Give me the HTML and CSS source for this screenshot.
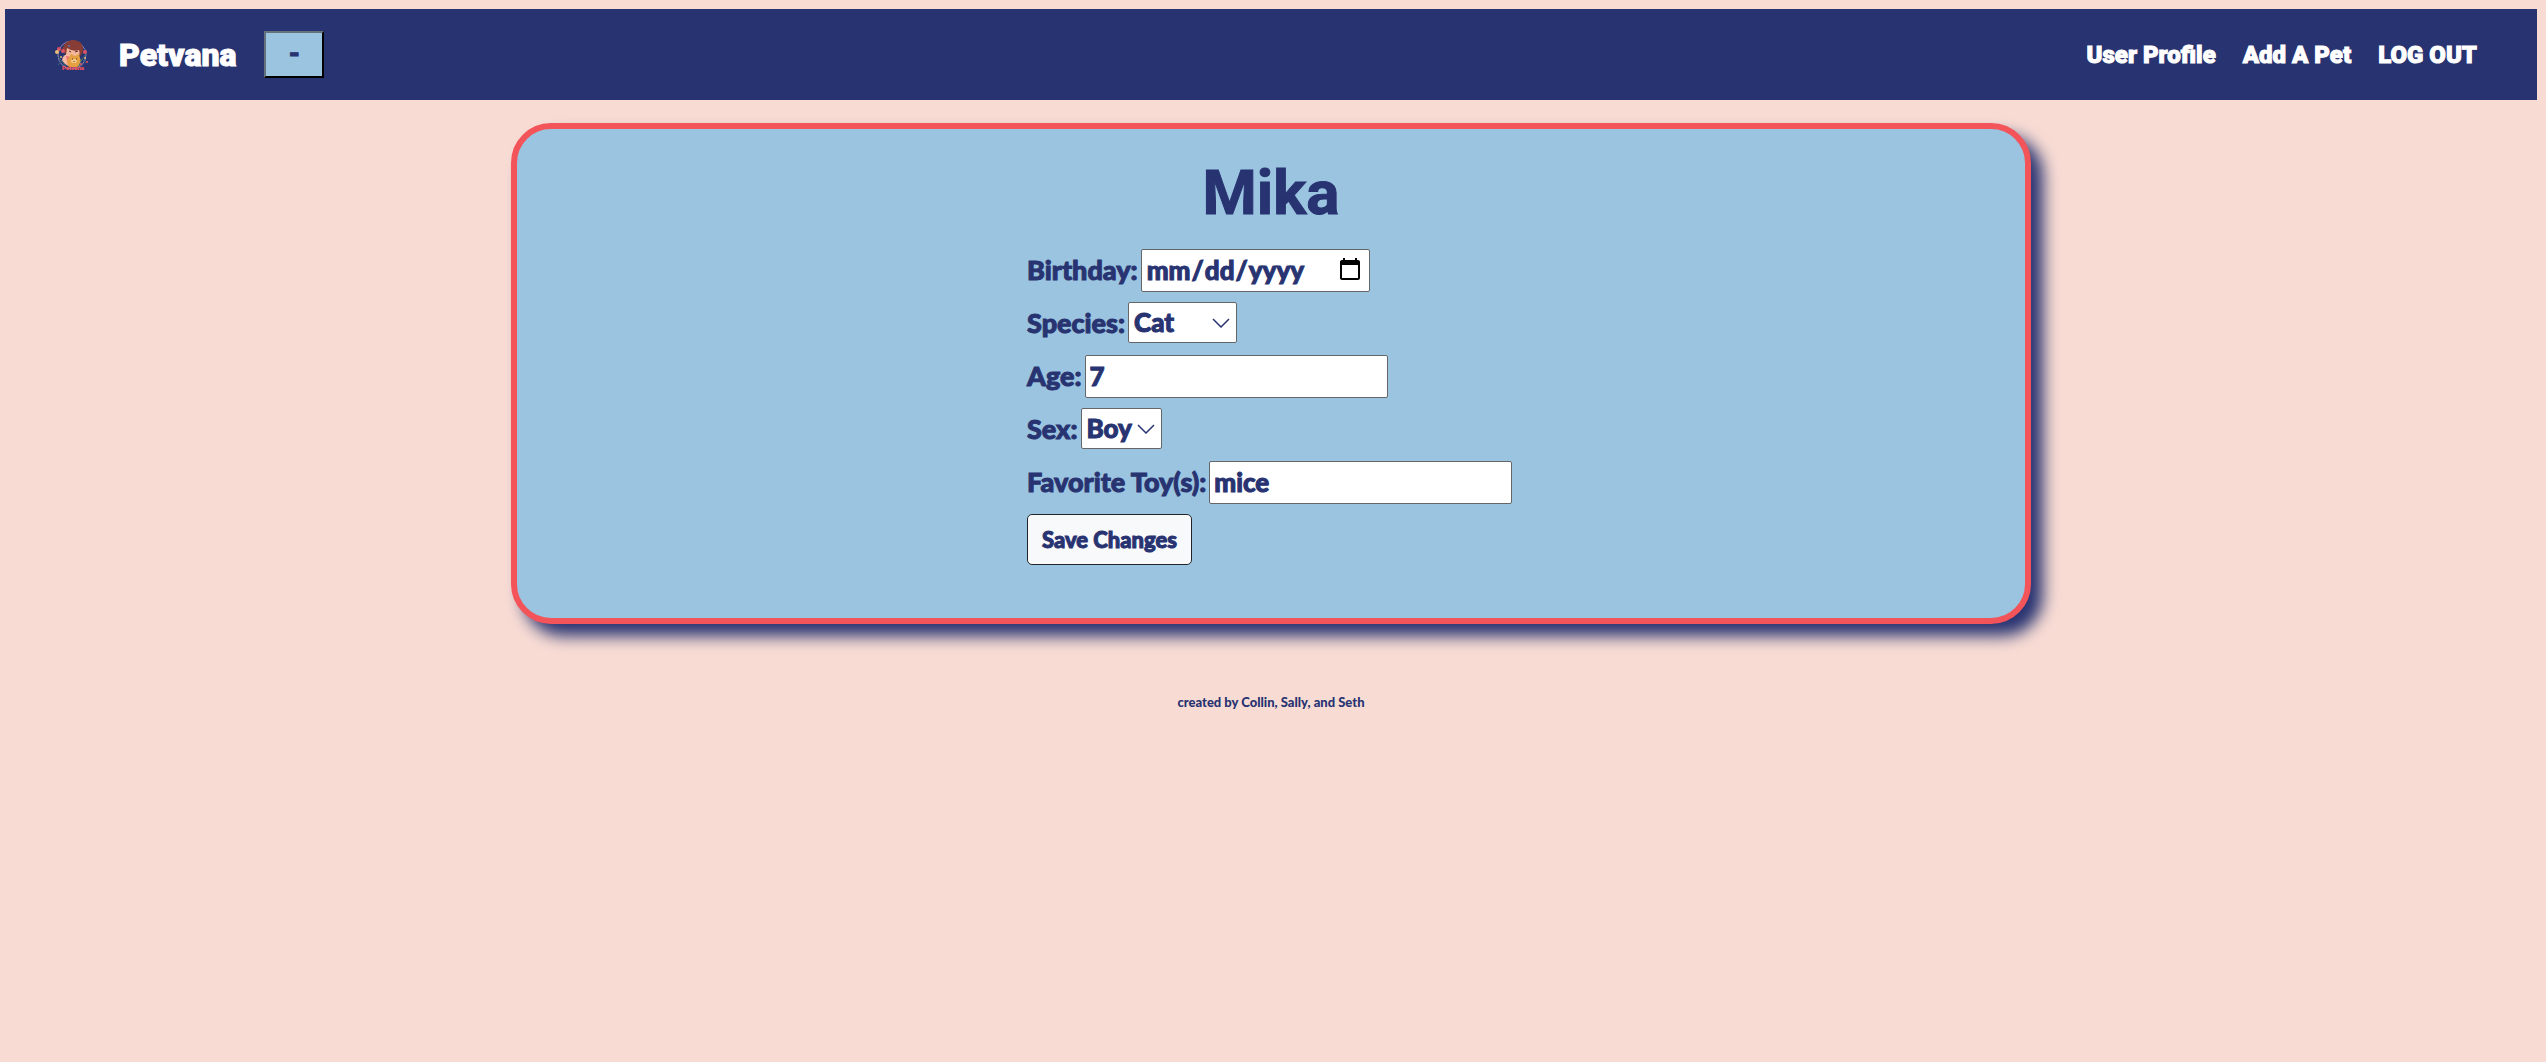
FILE: index.html
```html
<!DOCTYPE html>
<html lang="en">
<head>
<meta charset="utf-8">
<meta name="viewport" content="width=device-width, initial-scale=1">
<title>Petvana</title>
<link rel="stylesheet" href="styles.css">
</head>
<body>
<header class="navbar">
  <a class="logo" href="#" aria-label="Petvana home">
    <svg viewBox="0 0 36 32" width="36" height="32" aria-hidden="true">
      <circle cx="18" cy="16" r="14" fill="none" stroke="#8d83b5" stroke-width="1"/>
      <path d="M9 8Q12 1 20 1q9 1 9 9 0 5-3 7H14L9 13q-2-2 0-5z" fill="#873d35"/>
      <path d="M13 9q6 4 12 2 2 5-2 7-7 2-11-2z" fill="#f3b79c"/>
      <path d="M8 21q1-6 7-6l7 13q-10 1-14-7z" fill="#f8b9a4"/>
      <path d="M12 17q5-1 5 7l-3 2z" fill="#f27477"/>
      <path d="M15 18l2-3 4 2 4-2 1 4q3 7-3 9h-8q-4-5 0-10z" fill="#e5a044"/>
      <ellipse cx="20" cy="22" rx="3" ry="2" fill="#f5cb83"/>
      <path d="M18 20h1m3 0h1m-3 2v1M15 12l2 1m4 0 3-1" stroke="#602c30" fill="none"/>
      <path d="M3 17l5 5-4 4m4-4 4 6m20-13-4 5 4 4m-4-4-3 7" stroke="#386c70" stroke-width="1" fill="none"/>
      <g fill="#dd5366"><circle cx="5" cy="10" r="2"/><circle cx="9" cy="12" r="2"/><circle cx="31" cy="13" r="2"/><circle cx="33" cy="23" r="1"/><circle cx="27" cy="25" r="1"/></g>
      <g fill="#e6bc76"><circle cx="3" cy="13" r="2"/><circle cx="7" cy="18" r="1"/><circle cx="31" cy="19" r="1"/></g>
      <circle cx="15" cy="7" r="1" fill="#5276b0"/>
      <text class="logo-text" x="19" y="31" text-anchor="middle">Petvana</text>
    </svg>
  </a>
  <a class="brand" href="#">Petvana</a>
  <button class="toggle" type="button">-</button>
  <nav class="links">
    <a href="#">User Profile</a>
    <a href="#">Add A Pet</a>
    <a href="#">LOG OUT</a>
  </nav>
</header>
<main class="card">
  <h1>Mika</h1>
  <form class="pet-form">
    <div class="row"><label for="birthday">Birthday:</label><input class="date" id="birthday" type="date"></div>
    <div class="row"><label for="species">Species:</label><select class="species" id="species"><option>Cat</option><option>Dog</option></select></div>
    <div class="row"><label for="age">Age:</label><input class="text" id="age" type="text" value="7"></div>
    <div class="row"><label for="sex">Sex:</label><select class="sex" id="sex"><option>Boy</option><option>Girl</option></select></div>
    <div class="row"><label for="toys">Favorite Toy(s):</label><input class="text" id="toys" type="text" value="mice"></div>
    <button class="save" type="button">Save Changes</button>
  </form>
</main>
<footer class="footer">created by Collin, Sally, and Seth</footer>
</body>
</html>
```
FILE: styles.css
```css
* { box-sizing: border-box; }

body {
  margin: 9px 9px 9px 5px;
  background: #f8dcd4;
  color: #283371;
  font-family: Lato, "Open Sans", sans-serif;
  font-size: 26px;
  font-weight: 900;
}

.navbar,
h1 {
  font-family: Roboto, "Open Sans", sans-serif;
}

.navbar {
  display: flex;
  align-items: center;
  min-height: 91px;
  padding: 0 60px 0 49px;
  background: #283371;
}

.logo { display: flex; }
.logo-text { font-size: 6px; fill: #f25459; }

.navbar a { color: #fff; text-decoration: none; }

.brand,
.links,
.row,
h1 {
  -webkit-text-stroke: 1px currentColor;
}

.brand {
  margin: 0 28px 0 29px;
  font-size: 32px;
  line-height: 40px;
}

.toggle {
  width: 60px;
  height: 47px;
  padding: 0 0 4px;
  border: 2px outset #212529;
  background: #9ac4df;
  color: inherit;
  font: inherit;
  -webkit-text-stroke: 1px currentColor;
}

.links {
  display: flex;
  gap: 27px;
  margin-left: auto;
  font-size: 24px;
  line-height: 32px;
}

.card {
  display: flex;
  flex-direction: column;
  align-items: center;
  width: 60%;
  margin: 23px auto 0;
  padding: 24px 20px 53px;
  border: 6px solid #f25459;
  border-radius: 40px;
  background: #9ac4df;
  box-shadow: 12px 12px 16px #283371;
}

h1 {
  margin: 0 0 16px;
  font-size: 62px;
  line-height: 80px;
}

.pet-form {
  display: flex;
  flex-direction: column;
  align-items: flex-start;
  gap: 10px;
  width: 488px;
}

.row {
  display: flex;
  gap: 3px;
  height: 43px;
}

.row label {
  font-size: 27px;
  line-height: 42px;
  white-space: nowrap;
}

.row input,
.row select {
  border: 1px solid #666;
  border-radius: 2px;
  background-color: #fff;
  color: inherit;
  font: inherit;
}

.row input { height: 43px; padding: 0 4px 2px; }
.date { width: 229px; }
.text { width: 303px; }

.row select {
  height: 41px;
  padding: 0 5px 2px;
  appearance: none;
  background-image: url("data:image/svg+xml,%3Csvg xmlns='http://www.w3.org/2000/svg' viewBox='0 0 18 10'%3E%3Cpath d='M1 1l8 8 8-8' fill='none' stroke='%23283371' stroke-width='1.5'/%3E%3C/svg%3E");
  background-position: right 6px center;
  background-repeat: no-repeat;
  background-size: 18px 10px;
}
.species { width: 109px; }
.sex { width: 81px; }

.save {
  height: 51px;
  padding: 0 14px;
  border: 1px solid #212529;
  border-radius: 5px;
  background: #f8f9fa;
  color: inherit;
  font: inherit;
  font-size: 22px;
  -webkit-text-stroke: 1px currentColor;
}

.footer {
  margin-top: 70px;
  font-size: 13px;
  line-height: 16px;
  text-align: center;
}
```
